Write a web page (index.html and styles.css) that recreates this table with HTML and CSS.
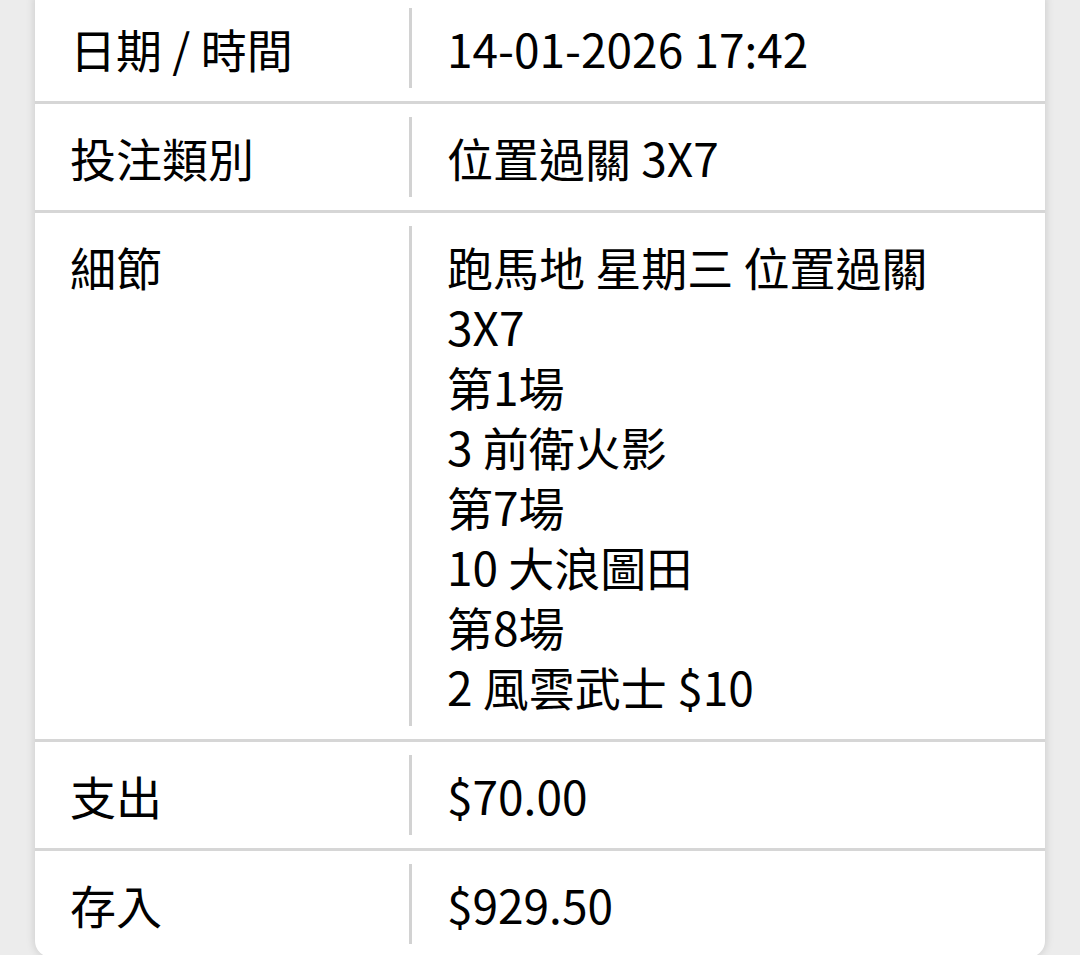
FILE: index.html
```html
<!DOCTYPE html>
<html lang="zh-Hant">
<head>
<meta charset="utf-8">
<title>投注記錄</title>
<link rel="stylesheet" href="styles.css">
</head>
<body>
<div class="card">
  <div class="row">
    <div class="label">日期 / 時間</div>
    <div class="divider"></div>
    <div class="value">14-01-2026 17:42</div>
  </div>
  <div class="row">
    <div class="label">投注類別</div>
    <div class="divider"></div>
    <div class="value">位置過關 3X7</div>
  </div>
  <div class="row">
    <div class="label">細節</div>
    <div class="divider"></div>
    <div class="value">跑馬地 星期三 位置過關<br>3X7<br>第1場<br>3 前衛火影<br>第7場<br>10 大浪圖田<br>第8場<br>2 風雲武士 $10</div>
  </div>
  <div class="row">
    <div class="label">支出</div>
    <div class="divider"></div>
    <div class="value">$70.00</div>
  </div>
  <div class="row">
    <div class="label">存入</div>
    <div class="divider"></div>
    <div class="value">$929.50</div>
  </div>
</div>
</body>
</html>
```

FILE: styles.css
```css
html, body {
  margin: 0;
  padding: 0;
  background: #ececec;
  height: 100%;
  overflow: hidden;
}

body {
  font-family: "Noto Sans CJK TC", "Noto Sans", sans-serif;
  color: #000000;
}

.card {
  margin: -5px 35px 0 35px;
  background: #ffffff;
  border-radius: 0 0 16px 16px;
  box-shadow: 0 0 10px rgba(0, 0, 0, 0.16);
}

.row {
  display: grid;
  grid-template-columns: 374px 3px 1fr;
  padding: 13px 0;
  border-bottom: 3px solid #d6d6d6;
}

.row:last-child {
  border-bottom: none;
}

.label,
.value {
  font-size: 46px;
  line-height: 60px;
  padding: 10px 0 10px 35px;
  font-weight: 400;
}

.divider {
  background: #d2d2d2;
}
```
